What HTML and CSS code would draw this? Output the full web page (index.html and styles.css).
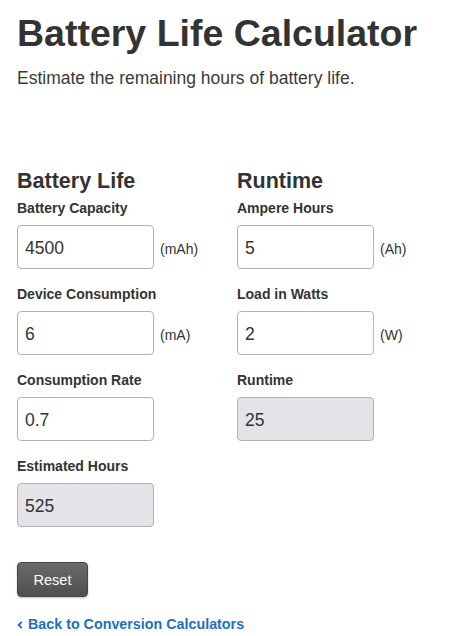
FILE: index.html
```html
<!DOCTYPE html>
<html lang="en">
<head>
<meta charset="utf-8">
<title>Battery Life Calculator</title>
<link rel="stylesheet" href="styles.css">
</head>
<body>
<main class="page">
  <header class="intro">
    <h1 class="title">Battery Life Calculator</h1>
    <p class="lead">Estimate the remaining hours of battery life.</p>
  </header>

  <div class="columns">
    <section class="col">
      <h2 class="col-title">Battery Life</h2>
      <div class="field">
        <label class="field-label">Battery Capacity</label>
        <div class="field-row"><input class="input" type="text" value="4500"><span class="unit">(mAh)</span></div>
      </div>
      <div class="field">
        <label class="field-label">Device Consumption</label>
        <div class="field-row"><input class="input" type="text" value="6"><span class="unit">(mA)</span></div>
      </div>
      <div class="field">
        <label class="field-label">Consumption Rate</label>
        <div class="field-row"><input class="input" type="text" value="0.7"></div>
      </div>
      <div class="field">
        <label class="field-label">Estimated Hours</label>
        <div class="field-row"><input class="input readonly" type="text" value="525" readonly></div>
      </div>
    </section>

    <section class="col">
      <h2 class="col-title">Runtime</h2>
      <div class="field">
        <label class="field-label">Ampere Hours</label>
        <div class="field-row"><input class="input" type="text" value="5"><span class="unit">(Ah)</span></div>
      </div>
      <div class="field">
        <label class="field-label">Load in Watts</label>
        <div class="field-row"><input class="input" type="text" value="2"><span class="unit">(W)</span></div>
      </div>
      <div class="field">
        <label class="field-label">Runtime</label>
        <div class="field-row"><input class="input readonly" type="text" value="25" readonly></div>
      </div>
    </section>
  </div>

  <div class="actions">
    <button class="btn-reset" type="button">Reset</button>
  </div>

  <a class="back" href="#"><svg class="chev" width="6" height="8" viewBox="0 0 6 8" aria-hidden="true"><path d="M4.8 0.8 L1.6 4 L4.8 7.2" fill="none" stroke="currentColor" stroke-width="1.8"/></svg>Back to Conversion Calculators</a>
</main>
</body>
</html>
```

FILE: styles.css
```css
html, body {
  margin: 0;
  padding: 0;
  background: #ffffff;
}

body {
  font-family: "Liberation Sans", Arial, sans-serif;
  color: #333333;
}

.page {
  padding: 13px 0 0 17px;
}

.title {
  margin: 0;
  font-size: 37.5px;
  line-height: 41px;
  font-weight: bold;
  color: #333333;
}

.lead {
  margin: 12px 0 0 0;
  font-size: 17.5px;
  line-height: 24px;
  color: #3a3a3a;
}

.columns {
  display: grid;
  grid-template-columns: 220px 220px;
  margin-top: 78px;
}

.col {
  display: flex;
  flex-direction: column;
}

.col-title {
  margin: 0 0 4px 0;
  font-size: 21.5px;
  line-height: 26px;
  font-weight: bold;
  color: #333333;
}

.field {
  display: flex;
  flex-direction: column;
  margin-bottom: 15px;
}

.field-label {
  font-size: 14px;
  line-height: 20px;
  font-weight: bold;
  color: #333333;
  margin-bottom: 7px;
}

.field-row {
  display: flex;
  align-items: center;
}

.input {
  box-sizing: border-box;
  width: 137px;
  height: 44px;
  margin: 0;
  padding: 2px 7px 0 7px;
  border: 1px solid #b3b3b3;
  border-radius: 4px;
  background: #ffffff;
  font-family: "Liberation Sans", Arial, sans-serif;
  font-size: 17.5px;
  color: #333333;
  outline: none;
}

.input.readonly {
  background: #e2e4e8;
}

.unit {
  margin-left: 6px;
  padding-top: 3px;
  font-size: 14px;
  color: #333333;
}

.actions {
  margin-top: 20px;
}

.btn-reset {
  box-sizing: border-box;
  width: 71px;
  height: 35px;
  margin: 0;
  padding: 0;
  border: 1px solid #474747;
  border-radius: 4px;
  background: linear-gradient(#6a6a6a, #4f4f4f);
  color: #ffffff;
  font-family: "Liberation Sans", Arial, sans-serif;
  font-size: 14.5px;
  box-shadow: 0 1px 2px rgba(0, 0, 0, 0.25);
}

.back {
  display: flex;
  align-items: center;
  margin-top: 17px;
  font-size: 14.3px;
  line-height: 20px;
  font-weight: bold;
  color: #1e6fc0;
  text-decoration: none;
}

.chev {
  margin-right: 5px;
  margin-top: 1px;
}
```
